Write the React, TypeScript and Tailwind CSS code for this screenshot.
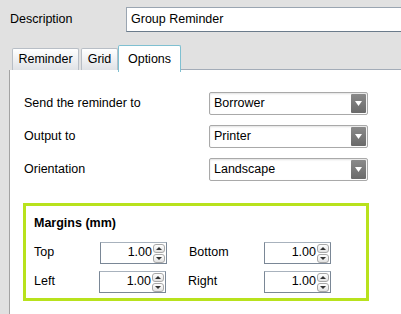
import React from "react";

function Select({ value }: { value: string }) {
  return (
    <div className="flex h-[23px] w-[159px] items-stretch rounded-[2px] border border-[#a9a9a9] bg-white shadow-[inset_0_1px_2px_rgba(0,0,0,0.12)]">
      <div className="flex flex-1 items-center pl-[4px] text-black">{value}</div>
      <div className="m-[1px] flex w-[15px] items-center justify-center rounded-[1px] bg-gradient-to-b from-[#8a8a8a] to-[#6a6a6a]">
        <svg width="7" height="5" viewBox="0 0 7 5">
          <path d="M0 0h7L3.5 5z" fill="#fff" />
        </svg>
      </div>
    </div>
  );
}

function Spin({ value }: { value: string }) {
  return (
    <div className="flex h-[22px] w-[67px] items-start border border-[#7a8796] border-t-[#a8b2bd] bg-white">
      <div className="flex-1 pr-[1px] pt-[1px] text-right leading-[16px] text-black">{value}</div>
      <div className="flex flex-col gap-[1px] pr-[1px] pt-[1px]">
        <div className="flex h-[9px] w-[12px] items-center justify-center rounded-[3px] border border-[#a8a8a8] bg-gradient-to-b from-white to-[#e2e2e2]">
          <svg width="6" height="3" viewBox="0 0 6 3">
            <path d="M0 3h6L3 0z" fill="#333" />
          </svg>
        </div>
        <div className="flex h-[9px] w-[12px] items-center justify-center rounded-[3px] border border-[#a8a8a8] bg-gradient-to-b from-white to-[#e2e2e2]">
          <svg width="6" height="3" viewBox="0 0 6 3">
            <path d="M0 0h6L3 3z" fill="#333" />
          </svg>
        </div>
      </div>
    </div>
  );
}

export default function App() {
  return (
    <div className="h-[314px] w-[401px] overflow-hidden bg-[#e1e1e1] font-['Liberation_Sans',sans-serif] text-[12.5px] text-black">
      {/* Description */}
      <div className="flex items-center pt-[7px]">
        <div className="w-[126px] pl-[10px]">Description</div>
        <div className="flex h-[25px] flex-1 items-center border border-[#9aa5b1] border-b-[#6b7b8b] border-r-0 bg-white pl-[4px]">
          Group Reminder
        </div>
      </div>

      {/* Tabs */}
      <div className="mt-[12px] flex items-end pl-[12px]">
        <div className="flex h-[22px] w-[67px] items-center justify-center rounded-t-[2px] border border-b-0 border-[#b8bec6] bg-gradient-to-b from-white to-[#dfe2e6]">
          Reminder
        </div>
        <div className="ml-[2px] flex h-[22px] w-[37px] items-center justify-center rounded-t-[2px] border border-b-0 border-[#b8bec6] bg-gradient-to-b from-white to-[#dfe2e6]">
          Grid
        </div>
        <div className="relative top-[1px] -mb-[1px] flex h-[27px] w-[63px] items-start justify-center rounded-t-[2px] border border-b-0 border-[#7fc0d1] bg-white pt-[4px]">
          Options
        </div>
        <div className="h-[1px] flex-1 bg-[#a3acb8]" />
      </div>

      {/* Panel */}
      <div className="ml-[9px] h-[250px] border-l border-[#a3a3a3] bg-white pl-[13px] pt-[22px]">
        <div className="flex flex-col gap-[10px]">
          <div className="flex items-center">
            <div className="w-[186px] pl-[1px]">Send the reminder to</div>
            <Select value="Borrower" />
          </div>
          <div className="flex items-center">
            <div className="w-[186px] pl-[1px]">Output to</div>
            <Select value="Printer" />
          </div>
          <div className="flex items-center">
            <div className="w-[186px] pl-[1px]">Orientation</div>
            <Select value="Landscape" />
          </div>
        </div>

        {/* Margins */}
        <div className="mt-[22px] h-[98px] w-[346px] border-[3px] border-[#b8e21d] pl-[8px] pt-[8px]">
          <div className="font-bold">Margins (mm)</div>
          <div className="mt-[9px] flex items-center">
            <div className="w-[66px]">Top</div>
            <Spin value="1.00" />
            <div className="w-[97px] pl-[22px]">Bottom</div>
            <Spin value="1.00" />
          </div>
          <div className="mt-[7px] flex items-center">
            <div className="w-[65px]">Left</div>
            <Spin value="1.00" />
            <div className="w-[98px] pl-[22px]">Right</div>
            <Spin value="1.00" />
          </div>
        </div>
      </div>
    </div>
  );
}
